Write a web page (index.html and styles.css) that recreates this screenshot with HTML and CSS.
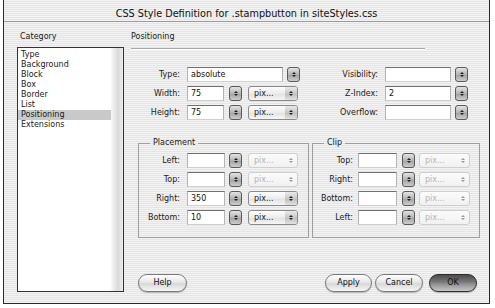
FILE: index.html
```html
<!DOCTYPE html>
<html lang="en">

<head>
  <meta charset="UTF-8">
  <meta name="viewport" content="width=device-width, initial-scale=1.0">
  <title>CSS Style Definition</title>
  <link rel="stylesheet" href="styles.css">
</head>

<body>
  <div class="window">
    <div class="titlebar">CSS Style Definition for .stampbutton in siteStyles.css</div>
    <div class="content">
      <div class="sidebar">
        <div class="heading cat">Category</div>
        <div class="listbox">
          <ul class="items">
            <li>Type</li>
            <li>Background</li>
            <li>Block</li>
            <li>Box</li>
            <li>Border</li>
            <li>List</li>
            <li class="selected">Positioning</li>
            <li>Extensions</li>
          </ul>
          <div class="track"></div>
        </div>
      </div>

      <div class="main">
        <div class="heading section">Positioning</div>

        <div class="topfields">
          <div class="col left">
            <div class="row">
              <span class="label">Type:</span>
              <input class="input w-type" type="text" value="absolute" readonly>
              <span class="stepper ml4"></span>
            </div>
            <div class="row">
              <span class="label">Width:</span>
              <input class="input w-num" type="text" value="75" readonly>
              <span class="stepper ml5"></span>
              <span class="select ml6"><span class="val">pix...</span><span class="arrows"></span></span>
            </div>
            <div class="row">
              <span class="label">Height:</span>
              <input class="input w-num" type="text" value="75" readonly>
              <span class="stepper ml5"></span>
              <span class="select ml6"><span class="val">pix...</span><span class="arrows"></span></span>
            </div>
          </div>
          <div class="col right">
            <div class="row">
              <span class="label">Visibility:</span>
              <input class="input w-wide" type="text" value="" readonly>
              <span class="stepper ml4"></span>
            </div>
            <div class="row">
              <span class="label">Z-Index:</span>
              <input class="input w-wide" type="text" value="2" readonly>
              <span class="stepper ml4"></span>
            </div>
            <div class="row">
              <span class="label">Overflow:</span>
              <input class="input w-wide" type="text" value="" readonly>
              <span class="stepper ml4"></span>
            </div>
          </div>
        </div>

        <div class="groups">
          <fieldset class="group placement">
            <legend>Placement</legend>
            <div class="rows">
              <div class="row">
                <span class="label">Left:</span>
                <input class="input" type="text" value="" readonly>
                <span class="stepper"></span>
                <span class="select off"><span class="val">pix...</span><span class="arrows"></span></span>
              </div>
              <div class="row">
                <span class="label">Top:</span>
                <input class="input" type="text" value="" readonly>
                <span class="stepper"></span>
                <span class="select off"><span class="val">pix...</span><span class="arrows"></span></span>
              </div>
              <div class="row">
                <span class="label">Right:</span>
                <input class="input" type="text" value="350" readonly>
                <span class="stepper"></span>
                <span class="select"><span class="val">pix...</span><span class="arrows"></span></span>
              </div>
              <div class="row">
                <span class="label">Bottom:</span>
                <input class="input" type="text" value="10" readonly>
                <span class="stepper"></span>
                <span class="select"><span class="val">pix...</span><span class="arrows"></span></span>
              </div>
            </div>
          </fieldset>
          <fieldset class="group clip">
            <legend>Clip</legend>
            <div class="rows">
              <div class="row">
                <span class="label">Top:</span>
                <input class="input" type="text" value="" readonly>
                <span class="stepper"></span>
                <span class="select off"><span class="val">pix...</span><span class="arrows"></span></span>
              </div>
              <div class="row">
                <span class="label">Right:</span>
                <input class="input" type="text" value="" readonly>
                <span class="stepper"></span>
                <span class="select off"><span class="val">pix...</span><span class="arrows"></span></span>
              </div>
              <div class="row">
                <span class="label">Bottom:</span>
                <input class="input" type="text" value="" readonly>
                <span class="stepper"></span>
                <span class="select off"><span class="val">pix...</span><span class="arrows"></span></span>
              </div>
              <div class="row">
                <span class="label">Left:</span>
                <input class="input" type="text" value="" readonly>
                <span class="stepper"></span>
                <span class="select off"><span class="val">pix...</span><span class="arrows"></span></span>
              </div>
            </div>
          </fieldset>
        </div>

        <div class="buttons">
          <button class="btn help">Help</button>
          <button class="btn apply">Apply</button>
          <button class="btn cancel">Cancel</button>
          <button class="btn ok">OK</button>
        </div>
      </div>
    </div>
  </div>
</body>

</html>
```

FILE: styles.css
```css
* {
  box-sizing: border-box;
  margin: 0;
  padding: 0;
}

body {
  background-color: #fff;
  font-family: "DejaVu Sans", sans-serif;
  font-size: 8px;
  color: #1a1a1a;
}

.window {
  width: 487px;
  height: 304px;
  margin-left: 3px;
  border: 1px solid #2a2a2a;
  border-top: 0;
  background: repeating-linear-gradient(#f3f3f3 0, #f3f3f3 1px, #e5e5e5 1px, #e5e5e5 2px);
  display: flex;
  flex-direction: column;
}

.titlebar {
  height: 22px;
  border-bottom: 1px solid #9a9a9a;
  text-align: center;
  font-size: 9.7px;
  line-height: 12px;
  padding-top: 8px;
  color: #111;
}

.content {
  flex: 1;
  display: flex;
  padding: 10px 9px 11px 13px;
}

/* 左侧分类列表 */
.sidebar {
  width: 107px;
  display: flex;
  flex-direction: column;
}

.heading {
  line-height: 10px;
}

.cat {
  padding-left: 3px;
}

.listbox {
  margin-top: 5px;
  flex: 1;
  border: 1px solid #333;
  background-color: #fff;
  display: flex;
}

.items {
  list-style: none;
  flex: 1;
  padding-top: 2px;
  line-height: 10px;
}

.items li {
  padding-left: 3px;
}

.items .selected {
  background-color: #c9c9c9;
}

.track {
  width: 12px;
  background: linear-gradient(to right, #f8f8f8, #dadada 60%, #ededed);
}

/* 右侧面板 */
.main {
  margin-left: 7px;
  flex: 1;
  display: flex;
  flex-direction: column;
}

.section {
  width: 294px;
  padding-bottom: 6px;
  border-bottom: 1px solid #a8a8a8;
  box-shadow: 0 1px 0 #fff;
}

.topfields {
  margin-top: 18px;
  display: flex;
  gap: 19px;
}

.col,
.rows {
  display: flex;
  flex-direction: column;
  gap: 4px;
}

.row {
  display: flex;
  align-items: center;
  height: 15px;
}

.label {
  text-align: right;
  padding-right: 7px;
  color: #222;
}

.left .label {
  width: 56px;
}

.right .label {
  width: 66px;
}

.input {
  height: 15px;
  width: 38px;
  padding: 0 3px;
  font: inherit;
  color: #111;
  background-color: #fff;
  border: 1px solid #b4b4b4;
  border-top-color: #707070;
  border-bottom-color: #d0d0d0;
  outline: none;
}

.w-type {
  width: 96px;
}

.w-num {
  width: 37px;
}

.w-wide {
  width: 66px;
}

.ml4 {
  margin-left: 4px;
}

.ml5 {
  margin-left: 5px;
}

.ml6 {
  margin-left: 6px;
}

/* 上下箭头按钮 */
.stepper {
  width: 13px;
  height: 15px;
  border: 1px solid #5a5a5a;
  border-radius: 3px;
  background: linear-gradient(#e4e4e4, #b4b4b4 50%, #a0a0a0 51%, #cdcdcd);
  display: flex;
  flex-direction: column;
  align-items: center;
  justify-content: center;
  gap: 1px;
}

.stepper::before,
.arrows::before {
  content: "";
  border-left: 2px solid transparent;
  border-right: 2px solid transparent;
  border-bottom: 2px solid #222;
}

.stepper::after,
.arrows::after {
  content: "";
  border-left: 2px solid transparent;
  border-right: 2px solid transparent;
  border-top: 2px solid #222;
}

.select {
  width: 50px;
  height: 15px;
  border: 1px solid #8a8a8a;
  border-radius: 3px;
  background: linear-gradient(#fdfdfd, #ececec 50%, #e0e0e0 51%, #f6f6f6);
  display: flex;
  align-items: center;
}

.select .val {
  flex: 1;
  padding-left: 5px;
}

.select .arrows {
  width: 12px;
  height: 100%;
  display: flex;
  flex-direction: column;
  align-items: center;
  justify-content: center;
  gap: 1px;
  border-radius: 0 2px 2px 0;
  background: linear-gradient(#eaeaea, #c8c8c8 50%, #bdbdbd 51%, #e2e2e2);
}

.select.off {
  border-color: #cfcfcf;
  color: #b4b4b4;
  background: linear-gradient(#fbfbfb, #f1f1f1);
}

.select.off .arrows {
  background: none;
}

.select.off .arrows::before {
  border-bottom-color: #9a9a9a;
}

.select.off .arrows::after {
  border-top-color: #9a9a9a;
}

/* 分组框 */
.groups {
  margin-top: 18px;
  margin-left: 7px;
  display: flex;
  gap: 3px;
}

.group {
  border: 1px solid #9e9e9e;
  padding: 5px 0 12px 0;
  height: 100px;
}

.group legend {
  margin-left: 11px;
  padding: 0 3px;
  line-height: 10px;
}

.placement {
  width: 171px;
}

.placement .label {
  width: 48px;
}

.placement .stepper {
  margin-left: 4px;
}

.placement .select {
  margin-left: 6px;
}

.clip {
  width: 168px;
}

.clip .label {
  width: 45px;
  padding-right: 5px;
}

.clip .input {
  width: 39px;
}

.clip .stepper {
  margin-left: 5px;
}

.clip .select {
  width: 51px;
  margin-left: 4px;
}

/* 底部按钮 */
.buttons {
  margin-top: 36px;
  height: 18px;
  display: flex;
  padding: 0 3px 0 7px;
}

.btn {
  height: 18px;
  width: 48px;
  font: inherit;
  color: #111;
  line-height: 16px;
  text-align: center;
  border: 1px solid #7a7a7a;
  border-radius: 9px;
  background: linear-gradient(#fefefe, #e8e8e8 45%, #d8d8d8 55%, #f6f6f6);
  box-shadow: 0 1px 1px rgba(0, 0, 0, 0.25);
}

.help {
  width: 49px;
}

.apply {
  width: 47px;
  margin-left: auto;
}

.cancel {
  margin-left: 3px;
}

.ok {
  margin-left: 6px;
  border-color: #2e2e2e;
  background: linear-gradient(#4c4c4c, #7a7a7a 45%, #8e8e8e 55%, #c6c6c6);
}
```
